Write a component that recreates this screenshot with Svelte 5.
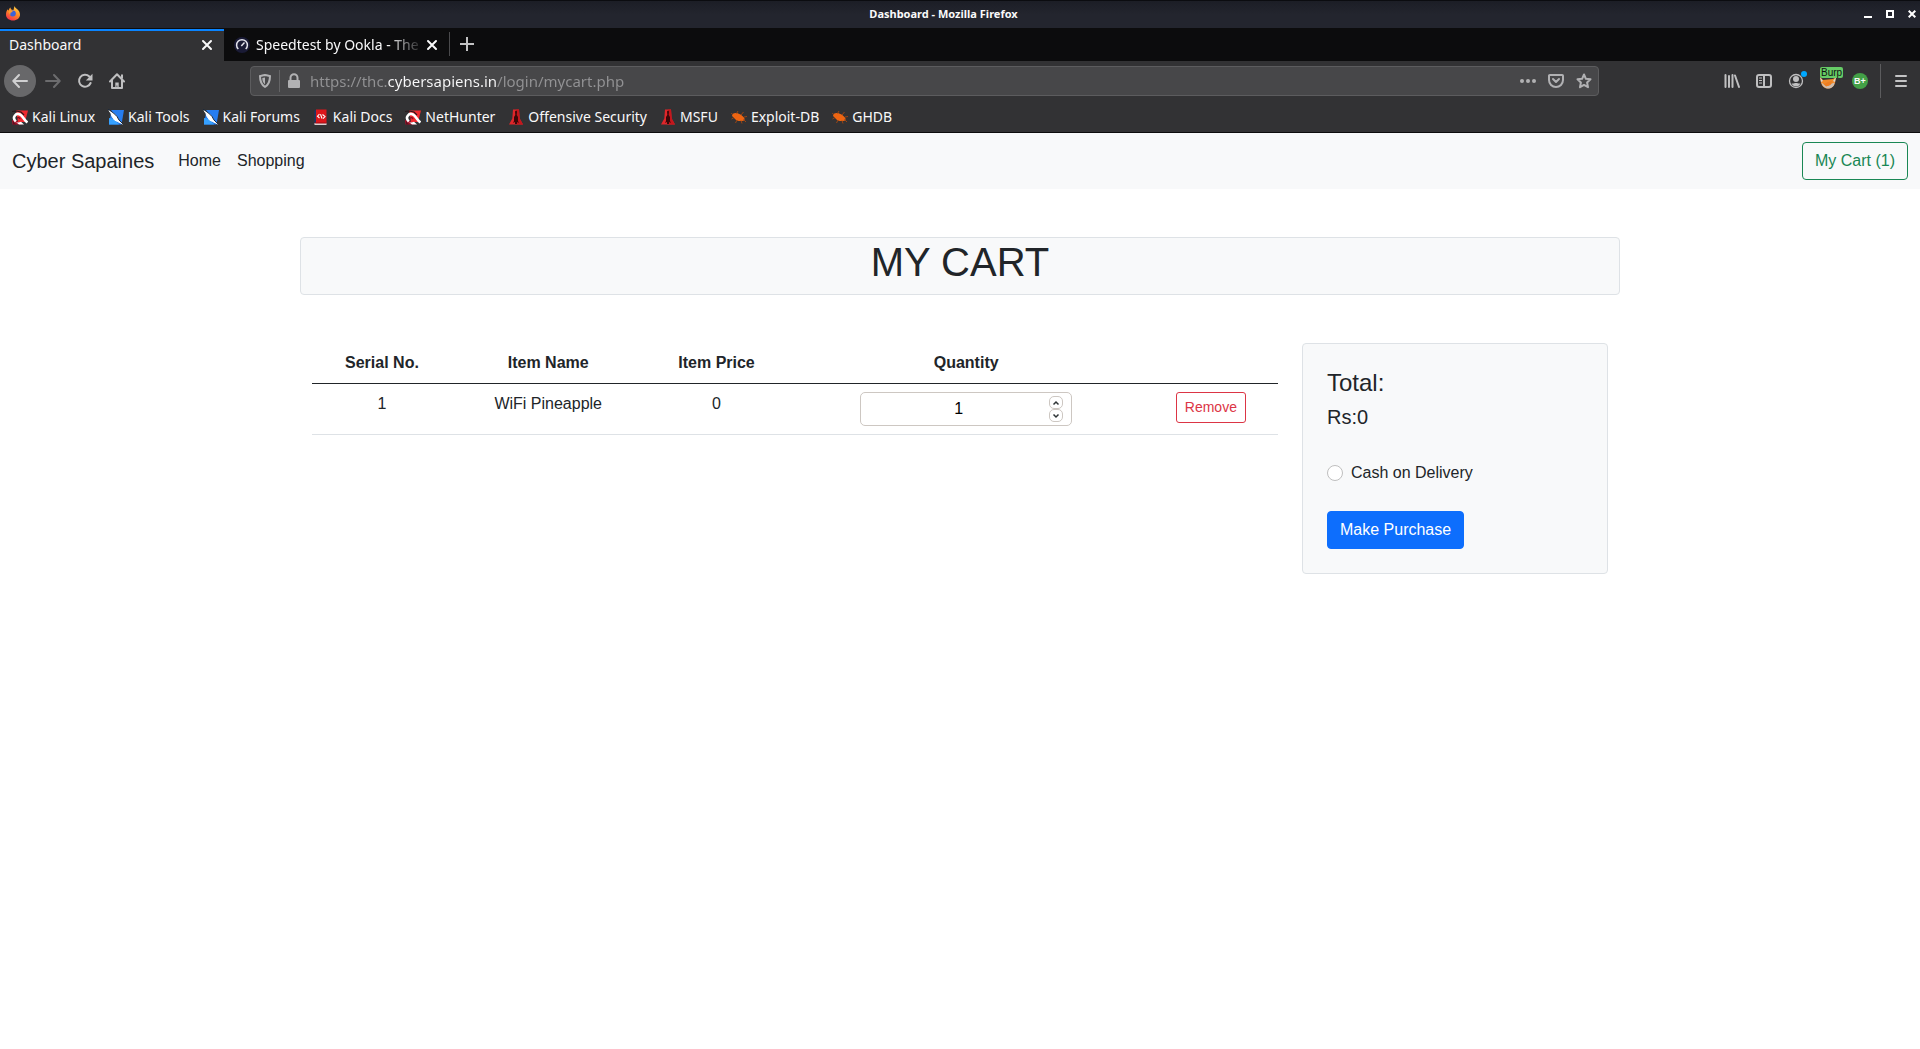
<script>
  const bookmarks = [
    { icon: 'dragon', label: 'Kali Linux' },
    { icon: 'tool', label: 'Kali Tools' },
    { icon: 'tool', label: 'Kali Forums' },
    { icon: 'book', label: 'Kali Docs' },
    { icon: 'dragon', label: 'NetHunter' },
    { icon: 'tower', label: 'Offensive Security' },
    { icon: 'tower', label: 'MSFU' },
    { icon: 'bug', label: 'Exploit-DB' },
    { icon: 'bug', label: 'GHDB' }
  ];

  let items = $state([{ id: 1, name: 'WiFi Pineapple', price: 0, quantity: 1 }]);
  let total = $derived(items.reduce((sum, i) => sum + i.price * i.quantity, 0));

  function remove(id) {
    items = items.filter((i) => i.id !== id);
  }
</script>

{#snippet closeIcon()}
  <svg width="16" height="16" viewBox="0 0 16 16" fill="none" stroke="currentColor" stroke-width="2" stroke-linecap="round"><path d="M4 4l8 8M12 4l-8 8" /></svg>
{/snippet}

{#snippet bookmarkIcon(name)}
  <svg width="16" height="16" viewBox="0 0 16 16">
    {#if name === 'dragon'}
      <path d="M4 1.500H16L13 13H6z" fill="#f0282e" />
      <path d="M0 11l5 1 5 3.500H.5z" fill="#a80f28" />
      <path d="M0 2.500L4 2l5 1 3 3" stroke="#29191c" stroke-width="1.200" fill="none" />
      <path d="M3.800 12.500C-.5 8.500 4 3.500 8 5.500c3 1.500 3.500 5 7.500 8" fill="none" stroke="#fff" stroke-width="2.600" />
      <path d="M2.500 12c1.500 1.800 4 1.800 6.500.8l3 2.700H7z" fill="#fff" />
      <path d="M5 9.500c1-1.500 2.500-1 3 .5" fill="none" stroke="#7e1020" stroke-width="1.200" />
      <path d="M1 15.500V12l3 3.500z" fill="#5a1220" />
    {:else if name === 'tool'}
      <path d="M3.500 1H16l-2.500 14.500H1z" fill="#267df0" />
      <path d="M1 9l5 1 5 5.500H1z" fill="#36a1ff" />
      <path d="M1 1.500l3 2.200L6.500 5l2.500 3 1.500 3 4.500 4-5.500-2.500-3-1.500-2.500-3.500-1-3z" fill="#fff" stroke="#fff" stroke-width="1" />
      <path d="M0 0l5.500 4 3.500 3.500 2 3.500 4 4" stroke="#1c2a3c" stroke-width="1" fill="none" />
    {:else if name === 'book'}
      <path d="M1.500 1.500L3.500.5V14H1.500z" fill="#1f3568" />
      <path d="M3 .5h10.500V14H3z" fill="#dc161b" />
      <path d="M1.500 14h12v2h-12z" fill="#d9cfd0" />
      <path d="M1.500 13.500h12v1H2.500z" fill="#9d0d14" />
      <path d="M6.500 5L4.500 7.200 6.500 9M9.500 5.500l2.500 2-2 2.200M7.500 5.200l1.500 4.300" fill="none" stroke="#fff" stroke-width="1.100" />
    {:else if name === 'tower'}
      <path d="M5 .5h6l.7 9 3.300 6H1l3.300-6z" fill="#e0262a" />
      <path d="M8 .5h3l.7 9 3.300 6H8z" fill="#c4161c" />
      <path d="M8 1.500l1 1-.3 3.500L10 8v4l1 2-2-1v2H7v-2l-2 1 1-2V8l1.300-2L7 2.500z" fill="#3b0708" />
    {:else}
      <path d="M1.500 5C4 3.200 7 4 9.500 5.500c2 1.200 3.200 2.500 4.200 4.500l-.7 1.500c-3 1-6.500.8-8.500-1C3 9 2.800 8.300 1 7z" fill="#ee6512" />
      <path d="M5.500 4.500L7 2M10 6l2.500-3M13 8l3-.5M3 8.500L.5 10M6 11l-1.500 3M10 11.500l1 3M12.500 10.500l2.500 2.500M1.500 5.500L.3 4" stroke="#9a4515" stroke-width="1" />
    {/if}
  </svg>
{/snippet}

<div class="browser">
  <header class="titlebar">
    <svg class="logo" width="16" height="16" viewBox="0 0 16 16">
      <defs>
        <linearGradient id="flame" x1=".8" y1="0" x2=".3" y2="1">
          <stop offset="0" stop-color="#ffd84a" />
          <stop offset=".5" stop-color="#ff8a24" />
          <stop offset="1" stop-color="#f3304c" />
        </linearGradient>
      </defs>
      <path d="M9.500 0c.4 1.300 1.500 2 2.800 3.200C14.200 4.700 15 6.500 15 8.700 15 12.100 11.900 14.500 8 14.500S1 12.100 1 8.700C1 6.300 1.700 4.600 2.800 3.200l.4 1.500C3.900 3.800 4.400 2 5.500 1.500c0 1.200.4 1.700 1.300 2.300L8.500 4z" fill="url(#flame)" />
      <circle cx="7.800" cy="7.600" r="3" fill="#3c62d8" />
      <path d="M3.500 4.800c1.500-.7 3-.3 4.300.6-.5.8-1.600.9-2.200 1.300-.4.700-.2 1.300.4 1.800-1.500.2-2.500-1.700-2.500-3.700z" fill="#ff9a2b" />
    </svg>
    <span class="window-title">Dashboard - Mozilla Firefox</span>
    <div class="window-controls">
      <button aria-label="Minimize"><svg width="8" height="8" viewBox="0 0 8 8"><path d="M0 6h8v2H0z" fill="#fff" /></svg></button>
      <button aria-label="Maximize"><svg width="8" height="8" viewBox="0 0 8 8"><path d="M1 1h6v6H1z" fill="none" stroke="#fff" stroke-width="2" /></svg></button>
      <button aria-label="Close"><svg width="8" height="8" viewBox="0 0 8 8"><path d="M.7.7l6.600 6.600M7.300.7L.7 7.300" stroke="#fff" stroke-width="2" /></svg></button>
    </div>
  </header>

  <div class="tabs">
    <div class="tab active">
      <span class="tab-label">Dashboard</span>
      <button class="tab-close" aria-label="Close Dashboard tab">{@render closeIcon()}</button>
    </div>
    <div class="tab">
      <svg class="favicon" width="16" height="16" viewBox="0 0 16 16">
        <circle cx="8" cy="8" r="8" fill="#1a1b35" />
        <path d="M4.300 12A5.400 5.400 0 1 1 11.700 12" fill="none" stroke="#e4e4ec" stroke-width="1.500" />
        <path d="M7.300 8.900L10.500 5.500" stroke="#e4e4ec" stroke-width="1.500" />
      </svg>
      <span class="tab-label fading">Speedtest by Ookla - The</span>
      <button class="tab-close" aria-label="Close Speedtest tab">{@render closeIcon()}</button>
    </div>
    <button class="new-tab" aria-label="New tab">
      <svg width="16" height="16" viewBox="0 0 16 16"><path d="M8 1v14M1 8h14" stroke="#c2c2c3" stroke-width="2" /></svg>
    </button>
  </div>

  <div class="toolbar">
    <div class="nav-buttons">
      <button class="back" aria-label="Back"><svg width="16" height="16" viewBox="0 0 16 16" fill="none" stroke="#d0d0d1" stroke-width="2" stroke-linecap="round" stroke-linejoin="round"><path d="M15 8H1.500M7 2L1.300 8 7 14" /></svg></button>
      <button aria-label="Forward"><svg width="16" height="16" viewBox="0 0 16 16" fill="none" stroke="#6c6c6e" stroke-width="2" stroke-linecap="round" stroke-linejoin="round"><path d="M1 8h13.500M9 2l5.700 6L9 14" /></svg></button>
      <button aria-label="Reload"><svg width="16" height="16" viewBox="0 0 16 16"><path d="M12.300 3.500A6 6 0 1 0 13.600 10" fill="none" stroke="#bfbfc0" stroke-width="2" stroke-linecap="round" /><path d="M15.500.8V7.500H8.800z" fill="#bfbfc0" /></svg></button>
      <button aria-label="Home"><svg width="16" height="16" viewBox="0 0 16 16"><path d="M1 8.500L8 1.300l7 7.200M3 7v8h10V7" fill="none" stroke="#bfbfc0" stroke-width="2" stroke-linecap="round" stroke-linejoin="round" /><path d="M12 1.500h2v4h-2zM6.300 15V9.500h3.400V15H8.300v-2.500H7.500V15z" fill="#bfbfc0" /></svg></button>
    </div>

    <div class="urlbar">
      <button aria-label="Tracking protection"><svg width="16" height="16" viewBox="0 0 16 16"><path d="M8 2C6 2.300 4.500 2.700 3 3c0 5 .8 8.500 5 11 4.200-2.500 5-6 5-11-1.500-.3-3-.7-5-1z" fill="none" stroke="#b1b1b3" stroke-width="2" stroke-linejoin="round" /><path d="M8 4.500v7C6 9.500 5.300 8 5.300 5z" fill="#b1b1b3" /></svg></button>
      <span class="url-divider"></span>
      <button aria-label="Site security"><svg width="16" height="16" viewBox="0 0 16 16"><path d="M4.500 8V4.800a3.500 3.500 0 0 1 7 0V8" fill="none" stroke="#b1b1b3" stroke-width="2" /><rect x="2" y="7" width="12" height="8" rx="1" fill="#b1b1b3" /></svg></button>
      <input class="url" type="text" aria-label="Address" value="https://thc.cybersapiens.in/login/mycart.php" />
      <button aria-label="Page actions"><svg width="16" height="16" viewBox="0 0 16 16" fill="#b1b1b3"><circle cx="2" cy="8" r="2" /><circle cx="8" cy="8" r="2" /><circle cx="14" cy="8" r="2" /></svg></button>
      <button aria-label="Save to Pocket"><svg width="16" height="16" viewBox="0 0 16 16" fill="none" stroke="#b1b1b3" stroke-width="2" stroke-linecap="round" stroke-linejoin="round"><path d="M1.800 2h12.400a.8.800 0 0 1 .8.800V7A7 7 0 0 1 1 7V2.800a.8.800 0 0 1 .8-.8z" /><path d="M5 6l3 3 3-3" /></svg></button>
      <button aria-label="Bookmark this page"><svg width="16" height="16" viewBox="0 0 16 16" fill="none" stroke="#b1b1b3" stroke-width="2" stroke-linejoin="round"><path d="M8 1.500l1.900 4.300 4.600.5-3.400 3.200.9 4.700L8 11.900l-4 2.300.9-4.700L1.500 6.300l4.600-.5z" /></svg></button>
    </div>

    <div class="tool-buttons">
      <button aria-label="Library"><svg width="16" height="16" viewBox="0 0 16 16" fill="none" stroke="#bfbfc0" stroke-width="2" stroke-linecap="round"><path d="M1.500 2v12M5 3v11M8.500 2v12M11 2.500l4 11.500" /></svg></button>
      <button aria-label="Sidebars"><svg width="16" height="16" viewBox="0 0 16 16" fill="none" stroke="#bfbfc0" stroke-width="2"><rect x="1" y="2" width="14" height="12" rx="2" /><path d="M8 2v12" /><path d="M3 5h3M3 7.500h3M3 10h3" stroke-width="1" /></svg></button>
      <button aria-label="Account"><svg width="16" height="16" viewBox="0 0 16 16"><circle cx="8" cy="8" r="6.500" fill="none" stroke="#bfbfc0" stroke-width="1.300" /><circle cx="8" cy="6" r="3" fill="#bfbfc0" /><path d="M3.500 10.500c2 .3 3-.5 4.500-.5s2.500.8 4.500.5C11.500 12.500 10 13.300 8 13.300s-3.500-.8-4.500-2.800z" fill="#bfbfc0" /></svg><span class="dot"></span></button>
      <button aria-label="FoxyProxy: Burp"><svg width="16" height="16" viewBox="0 0 16 16"><path d="M0 4l3 3 10-1 3-2-1 6c-1 3.500-3.500 5.500-7 5.500S2 13.500 1 10z" fill="#f18a2a" /><path d="M0 4l3 4-2 1zM16 4l-3 4 2 1z" fill="#ddd5cf" /><path d="M1.500 9.500l3.500 3 3 .5 4-2.500 2.500-1c0 4-3.500 6-6.500 6s-6-2.500-6.500-6z" fill="#cdbdb0" /><path d="M4 11l4-2 4-1-1.500 4-4.500 1.500z" fill="#ee7d21" /></svg><span class="badge">Burp</span></button>
      <button aria-label="BuiltWith"><span class="rating">B+</span></button>
      <span class="tool-divider"></span>
      <button aria-label="Open menu"><svg width="16" height="16" viewBox="0 0 16 16" stroke="#c4c4c5" stroke-width="2" stroke-linecap="round"><path d="M3 3h10M3 8h10M3 13h10" /></svg></button>
    </div>
  </div>

  <nav class="bookmarks" aria-label="Bookmarks">
    {#each bookmarks as b}
      <a href="#bookmark">{@render bookmarkIcon(b.icon)}{b.label}</a>
    {/each}
  </nav>
</div>

<nav class="navbar">
  <a class="brand" href="#top">Cyber Sapaines</a>
  <a class="nav-link" href="#home">Home</a>
  <a class="nav-link" href="#shopping">Shopping</a>
  <a class="btn outline-success" href="#cart">My Cart ({items.length})</a>
</nav>

<main class="container">
  <div class="heading"><h1>MY CART</h1></div>

  <div class="columns">
    <table>
      <thead>
        <tr>
          <th scope="col">Serial No.</th>
          <th scope="col">Item Name</th>
          <th scope="col">Item Price</th>
          <th scope="col">Quantity</th>
          <th scope="col" aria-label="Actions"></th>
        </tr>
      </thead>
      <tbody>
        {#each items as item, i (item.id)}
          <tr>
            <td>{i + 1}</td>
            <td>{item.name}</td>
            <td>{item.price}</td>
            <td>
              <div class="quantity">
                <input type="number" min="1" max="10" aria-label="Quantity" bind:value={item.quantity} />
                <div class="steppers">
                  <button aria-label="Increase" onclick={() => item.quantity++}><svg width="8" height="6" viewBox="0 0 8 6"><path d="M1.500 4.500L4 2l2.500 2.500" /></svg></button>
                  <button aria-label="Decrease" onclick={() => item.quantity--}><svg width="8" height="6" viewBox="0 0 8 6"><path d="M1.500 1.500L4 4l2.500-2.500" /></svg></button>
                </div>
              </div>
            </td>
            <td><button class="btn small outline-danger" onclick={() => remove(item.id)}>Remove</button></td>
          </tr>
        {/each}
      </tbody>
    </table>

    <aside class="summary">
      <h2>Total:</h2>
      <p class="amount">Rs:{total}</p>
      <label class="payment"><input type="radio" name="payment" value="cod" />Cash on Delivery</label>
      <button class="btn primary">Make Purchase</button>
    </aside>
  </div>
</main>

<style>
  :global(body) {
    background: #fff;
    color: #212529;
    font: 16px/24px "Liberation Sans", Arial, sans-serif;
  }

  * {
    box-sizing: border-box;
  }

  a {
    color: inherit;
    text-decoration: none;
  }

  svg {
    display: block;
    flex: none;
  }

  button {
    margin: 0;
    cursor: pointer;
  }

  /* Browser window */
  .browser {
    background: #323234;
    color: #f9f9fa;
    font: 14px/20px "Noto Sans", sans-serif;
    border-bottom: 1px solid #0c0c0d;
  }

  .browser button {
    display: flex;
    align-items: center;
    justify-content: center;
    flex: none;
    padding: 0;
    border: 0;
    background: none;
    color: inherit;
  }

  .titlebar {
    display: grid;
    grid-template-columns: 1fr auto 1fr;
    align-items: center;
    height: 28px;
    padding: 0 4px 2px 5px;
    border-top: 1px solid #0b0c10;
    background: linear-gradient(#1c1e26, #23252e 50%);
  }

  .window-title {
    padding-right: 34px;
    font-size: 11px;
    font-weight: 700;
  }

  .window-controls {
    display: flex;
    justify-content: flex-end;
    gap: 14px;
  }

  .tabs {
    display: flex;
    height: 33px;
    background: #0c0c0d;
  }

  .tab {
    display: flex;
    align-items: center;
    width: 225px;
    padding: 0 9px 0 10px;
  }

  .tab.active {
    width: 224px;
    margin-top: 1px;
    padding: 0 9px 3px;
    border-top: 2px solid #0a84ff;
    background: #323234;
  }

  .favicon {
    margin-right: 6px;
  }

  .tab-label {
    flex: 1;
    overflow: hidden;
    white-space: nowrap;
  }

  .fading {
    mask-image: linear-gradient(to left, transparent, #000 36px);
  }

  .tabs .new-tab {
    width: 34px;
    margin: 4px 0 5px;
    border-left: 1px solid #4a4a4c;
  }

  .toolbar {
    display: flex;
    align-items: center;
    height: 40px;
    padding: 0 3px 0 4px;
  }

  .nav-buttons {
    display: flex;
    margin-right: 117px;
  }

  .nav-buttons button {
    width: 32px;
    height: 32px;
  }

  .nav-buttons .back {
    margin-right: 1px;
    border-radius: 50%;
    background: #68686a;
  }

  .urlbar {
    display: flex;
    flex: 1;
    align-items: center;
    height: 30px;
    border: 1px solid #5c5c5e;
    border-radius: 4px;
    background: #474749;
  }

  .urlbar button {
    width: 28px;
    height: 28px;
  }

  .url-divider {
    width: 1px;
    height: 22px;
    background: #646466;
  }

  .url {
    flex: 1;
    min-width: 0;
    padding: 0 0 0 2px;
    border: 0;
    outline: 0;
    font: inherit;
    font-size: 15px;
    background: linear-gradient(to right, #929294 79px, #f9f9fa 79px 189px, #929294 189px);
    background-clip: text;
    -webkit-text-fill-color: transparent;
  }

  .tool-buttons {
    display: flex;
    align-items: center;
    margin-left: 117px;
  }

  .tool-buttons button {
    position: relative;
    width: 32px;
    height: 32px;
  }

  .tool-divider {
    width: 1px;
    height: 34px;
    margin: 0 4px;
    background: #5c5c5e;
  }

  .dot {
    position: absolute;
    top: 6px;
    right: 5px;
    width: 6px;
    height: 6px;
    border-radius: 50%;
    background: #00a8ff;
  }

  .badge {
    position: absolute;
    top: 2px;
    left: 8px;
    padding: 0 1px;
    border-radius: 2px;
    background: #66cc66;
    color: #111;
    font-size: 10px;
    line-height: 11px;
  }

  .rating {
    width: 16px;
    height: 16px;
    border-radius: 50%;
    background: #43a047;
    font-size: 9px;
    font-weight: 700;
    line-height: 16px;
  }

  .bookmarks {
    display: flex;
    align-items: center;
    gap: 13px;
    height: 31px;
    padding: 0 12px;
  }

  .bookmarks a {
    display: flex;
    align-items: center;
    gap: 4px;
    white-space: nowrap;
  }

  /* Shop page */
  .btn {
    display: inline-block;
    padding: 6px 12px;
    border: 1px solid;
    border-radius: 4px;
    background: transparent;
    font: inherit;
  }

  .small {
    padding: 4px 8px;
    font-size: 14px;
    line-height: 21px;
    border-radius: 3px;
  }

  .outline-success {
    margin-left: auto;
    color: #198754;
  }

  .outline-danger {
    color: #dc3545;
  }

  .primary {
    border-color: #0d6efd;
    background: #0d6efd;
    color: #fff;
  }

  .navbar {
    display: flex;
    align-items: center;
    padding: 9px 12px;
    background: #f8f9fa;
  }

  .brand {
    margin-right: 16px;
    font-size: 20px;
    line-height: 30px;
  }

  .nav-link {
    padding: 0 8px;
  }

  .container {
    max-width: 1320px;
    margin: 48px auto;
  }

  .heading,
  .summary {
    border: 1px solid #dee2e6;
    border-radius: 4px;
    background: #f8f9fa;
  }

  .heading {
    margin-bottom: 48px;
    padding-bottom: 8px;
    text-align: center;
  }

  h1,
  h2,
  p {
    margin: 0;
    font-weight: 400;
  }

  h1 {
    font-size: 40px;
    line-height: 48px;
  }

  .columns {
    display: grid;
    grid-template-columns: 3fr 1fr;
    align-items: start;
  }

  table {
    margin: 0 12px;
    border-collapse: collapse;
    text-align: center;
  }

  th,
  td {
    padding: 8px;
    border-bottom: 1px solid #dee2e6;
    vertical-align: top;
  }

  th {
    border-color: #212529;
  }

  .quantity {
    display: flex;
    align-items: center;
    width: 212px;
    height: 34px;
    margin: 0 auto;
    padding: 0 8px 0 22px;
    border: 1px solid #cdc7c2;
    border-radius: 5px;
    background: #fff;
  }

  .quantity input {
    flex: 1;
    min-width: 0;
    padding: 0;
    border: 0;
    outline: 0;
    background: none;
    color: #000;
    font: inherit;
    text-align: center;
    appearance: textfield;
  }

  .steppers {
    display: grid;
  }

  .steppers button {
    display: grid;
    place-items: center;
    width: 14px;
    height: 13px;
    padding: 0;
    border: 1px solid #cdc7c2;
    border-radius: 5px;
    background: #fff;
  }

  .steppers path {
    fill: none;
    stroke: #2e3436;
    stroke-width: 1.5;
  }

  .summary {
    margin: 0 12px;
    padding: 24px;
  }

  .summary h2 {
    margin-bottom: 8px;
    font-size: 24px;
    line-height: 29px;
  }

  .amount {
    margin-bottom: 32px;
    font-size: 20px;
    line-height: 24px;
  }

  .payment {
    display: flex;
    align-items: center;
    gap: 8px;
    margin-bottom: 26px;
  }

  .payment input {
    width: 16px;
    height: 16px;
    margin: 0;
    border: 1px solid #bfbfbf;
    border-radius: 50%;
    background: #fff;
    appearance: none;
  }

  .payment input:checked {
    border: 5px solid #0d6efd;
  }
</style>
